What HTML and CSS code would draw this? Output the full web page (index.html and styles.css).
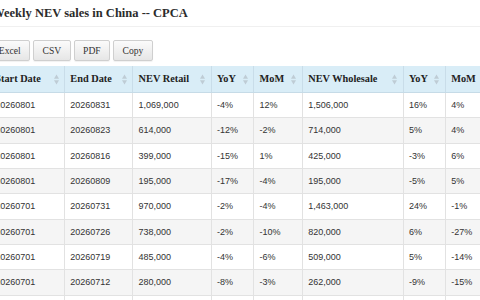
FILE: index.html
```html
<!DOCTYPE html>
<html lang="en">
<head>
<meta charset="utf-8">
<title>Weekly NEV sales in China -- CPCA</title>
<link rel="stylesheet" href="styles.css">
</head>
<body>
<div class="page">
  <h1 class="title">Weekly NEV sales in China -- CPCA</h1>
  <div class="toolbar">
    <button class="btn">Excel</button>
    <button class="btn">CSV</button>
    <button class="btn">PDF</button>
    <button class="btn">Copy</button>
  </div>
  <table class="grid">
    <colgroup>
      <col class="c1"><col class="c2"><col class="c3"><col class="c4"><col class="c5"><col class="c6"><col class="c7"><col class="c8">
    </colgroup>
    <thead>
      <tr>
        <th>Start Date<svg class="sort" viewBox="0 0 6 12"><polygon points="0,5 3,0 6,5"/><polygon points="0,7 3,12 6,7"/></svg></th>
        <th>End Date<svg class="sort" viewBox="0 0 6 12"><polygon points="0,5 3,0 6,5"/><polygon points="0,7 3,12 6,7"/></svg></th>
        <th>NEV Retail<svg class="sort" viewBox="0 0 6 12"><polygon points="0,5 3,0 6,5"/><polygon points="0,7 3,12 6,7"/></svg></th>
        <th>YoY<svg class="sort" viewBox="0 0 6 12"><polygon points="0,5 3,0 6,5"/><polygon points="0,7 3,12 6,7"/></svg></th>
        <th>MoM<svg class="sort" viewBox="0 0 6 12"><polygon points="0,5 3,0 6,5"/><polygon points="0,7 3,12 6,7"/></svg></th>
        <th>NEV Wholesale<svg class="sort" viewBox="0 0 6 12"><polygon points="0,5 3,0 6,5"/><polygon points="0,7 3,12 6,7"/></svg></th>
        <th>YoY<svg class="sort" viewBox="0 0 6 12"><polygon points="0,5 3,0 6,5"/><polygon points="0,7 3,12 6,7"/></svg></th>
        <th>MoM<svg class="sort" viewBox="0 0 6 12"><polygon points="0,5 3,0 6,5"/><polygon points="0,7 3,12 6,7"/></svg></th>
      </tr>
    </thead>
    <tbody>
      <tr><td>20260801</td><td>20260831</td><td>1,069,000</td><td>-4%</td><td>12%</td><td>1,506,000</td><td>16%</td><td>4%</td></tr>
      <tr><td>20260801</td><td>20260823</td><td>614,000</td><td>-12%</td><td>-2%</td><td>714,000</td><td>5%</td><td>4%</td></tr>
      <tr><td>20260801</td><td>20260816</td><td>399,000</td><td>-15%</td><td>1%</td><td>425,000</td><td>-3%</td><td>6%</td></tr>
      <tr><td>20260801</td><td>20260809</td><td>195,000</td><td>-17%</td><td>-4%</td><td>195,000</td><td>-5%</td><td>5%</td></tr>
      <tr><td>20260701</td><td>20260731</td><td>970,000</td><td>-2%</td><td>-4%</td><td>1,463,000</td><td>24%</td><td>-1%</td></tr>
      <tr><td>20260701</td><td>20260726</td><td>738,000</td><td>-2%</td><td>-10%</td><td>820,000</td><td>6%</td><td>-27%</td></tr>
      <tr><td>20260701</td><td>20260719</td><td>485,000</td><td>-4%</td><td>-6%</td><td>509,000</td><td>5%</td><td>-14%</td></tr>
      <tr><td>20260701</td><td>20260712</td><td>280,000</td><td>-8%</td><td>-3%</td><td>262,000</td><td>-9%</td><td>-15%</td></tr>
      <tr><td>20260601</td><td>20260630</td><td>850,000</td><td>3%</td><td>5%</td><td>1,012,000</td><td>8%</td><td>2%</td></tr>
    </tbody>
  </table>
</div>
</body>
</html>
```
FILE: styles.css
```css
html, body {
  margin: 0;
  padding: 0;
  background: #ffffff;
  overflow: hidden;
}
.page {
  width: 520px;
  margin-left: -11px;
}
.title {
  margin: 0;
  padding: 5px 0 5px 3.2px;
  font-family: "Liberation Serif", "Times New Roman", serif;
  font-size: 12.5px;
  line-height: 16px;
  font-weight: bold;
  color: #2b2b2b;
  border-bottom: 1px solid #f0f0f0;
}
.toolbar {
  display: flex;
  gap: 3.3px;
  margin-top: 13px;
  margin-left: 0.5px;
}
.btn {
  font-family: "Liberation Serif", "Times New Roman", serif;
  font-size: 9.6px;
  color: #333;
  height: 21px;
  padding: 0 8.3px;
  border: 1px solid #cfcfcf;
  border-radius: 2px;
  background: linear-gradient(to bottom, #fbfbfb 0%, #e6e6e6 100%);
  box-shadow: 0 1px 1px rgba(0,0,0,0.06);
}
.grid {
  margin-top: 5px;
  border-collapse: collapse;
  table-layout: fixed;
  width: 506px;
}
.c1 { width: 75px; }
.c2 { width: 68.3px; }
.c3 { width: 78.4px; }
.c4 { width: 42.6px; }
.c5 { width: 48.7px; }
.c6 { width: 100.7px; }
.c7 { width: 42.3px; }
.c8 { width: 50px; }
.grid th {
  position: relative;
  text-align: left;
  font-family: "Liberation Serif", "Times New Roman", serif;
  font-size: 10.3px;
  font-weight: bold;
  color: #222;
  line-height: 12px;
  padding: 7px 5.3px;
  background: #d9edf7;
  border-left: 1px solid #c9dde9;
  border-bottom: 1px solid #c6dbe7;
  white-space: nowrap;
}
.sort {
  position: absolute;
  right: 5.5px;
  top: 50%;
  width: 5px;
  height: 11px;
  margin-top: -5.5px;
  fill: #bfccd5;
}
.grid td {
  font-family: "Liberation Sans", Arial, sans-serif;
  font-size: 9px;
  color: #333;
  line-height: 10.34px;
  padding: 7px 5.3px;
  border-left: 1px solid #e2e2e2;
  border-bottom: 1px solid #e2e2e2;
  white-space: nowrap;
}
.grid tbody tr:nth-child(even) td {
  background: #f5f5f5;
}
```
